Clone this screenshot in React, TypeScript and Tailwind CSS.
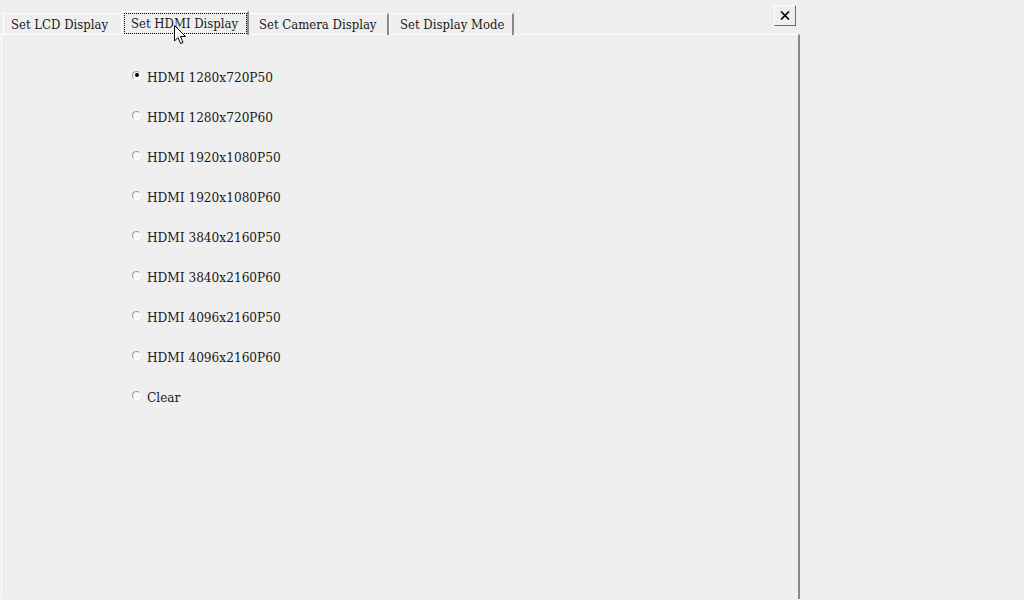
import { useState } from 'react'

const MODES = [
  'HDMI 1280x720P50',
  'HDMI 1280x720P60',
  'HDMI 1920x1080P50',
  'HDMI 1920x1080P60',
  'HDMI 3840x2160P50',
  'HDMI 3840x2160P60',
  'HDMI 4096x2160P50',
  'HDMI 4096x2160P60',
  'Clear',
]

const TABS = [
  { label: 'Set LCD Display', w: 'w-[118px]' },
  { label: 'Set HDMI Display', w: 'w-[128px]' },
  { label: 'Set Camera Display', w: 'w-[140px]' },
  { label: 'Set Display Mode', w: 'w-[125px]' },
]

function Radio({ checked }: { checked: boolean }) {
  return (
    <span className="relative inline-block w-[9px] h-[9px] rounded-full border border-t-[#9a9a9a] border-l-[#9a9a9a] border-b-white border-r-white bg-[#f8f8f8]">
      {checked && (
        <span className="absolute left-[1.5px] top-[1.5px] w-[4px] h-[4px] rounded-full bg-black" />
      )}
    </span>
  )
}

export default function App() {
  const [tab, setTab] = useState(1)
  const [mode, setMode] = useState(0)

  return (
    <div
      className="relative w-[1024px] h-[600px] bg-[#efefef] text-[13px] text-[#1a1a1a] overflow-hidden"
      style={{ fontFamily: '"DejaVu Serif Condensed", "DejaVu Serif", "Liberation Serif", serif', fontStretch: 'condensed' }}
    >
      {/* Tabs */}
      <div className="flex items-end h-[35px] pl-[3px]">
        {TABS.map((t, i) => {
          const active = i === tab
          const prevActive = i === tab + 1
          return (
            <button
              key={t.label}
              onClick={() => setTab(i)}
              className={`${t.w} flex items-center text-left border-t border-t-white ${
                active ? 'h-[24px] pl-[2px]' : 'h-[22px] pl-[7px]'
              } ${i + 1 === tab ? '' : 'border-r-2 border-r-[#8a8a8a]'} ${
                prevActive ? '' : 'border-l border-l-white'
              }`}
            >
              {active ? (
                <span className="flex items-center w-[123px] h-[21px] pl-[6px] border border-dotted border-black">
                  {t.label}
                </span>
              ) : (
                <span className={i === 0 ? 'pl-0' : 'pl-[3px]'}>{t.label}</span>
              )}
            </button>
          )
        })}
      </div>

      {/* Close */}
      <button className="absolute left-[774px] top-[5px] w-[22px] h-[21px] flex items-center justify-center border border-t-white border-l-white border-r-[#6b6b6b] border-b-[#6b6b6b] bg-[#efefef]">
        <svg width="10" height="9" viewBox="0 0 10 9">
          <path d="M1 0.5 L9 8.5 M9 0.5 L1 8.5" stroke="black" strokeWidth="1.6" />
        </svg>
      </button>

      {/* Panel */}
      <div className="w-[799px] h-[565px] border-t border-l border-t-white border-l-white border-r-2 border-r-[#8a8a8a] ml-[1px] -mt-px">
        <div className="flex flex-col gap-[22px] pl-[130px] pt-[33px] text-[13.5px]">
          {MODES.map((m, i) => (
            <label key={m} className="flex items-center h-[18px] cursor-default" onClick={() => setMode(i)}>
              <span className="mt-[-4px]">
                <Radio checked={mode === i} />
              </span>
              <span className="ml-[6px]">{m}</span>
            </label>
          ))}
        </div>
      </div>

      {/* Mouse cursor */}
      <svg className="absolute left-[174px] top-[25px]" width="13" height="21" viewBox="0 0 13 21">
        <path d="M0.5 0.5 L0.5 16 L4 12.5 L6.5 18.5 L9 17.5 L6.5 11.5 L11.5 11.5 Z" fill="white" stroke="black" strokeWidth="1" />
      </svg>
    </div>
  )
}
